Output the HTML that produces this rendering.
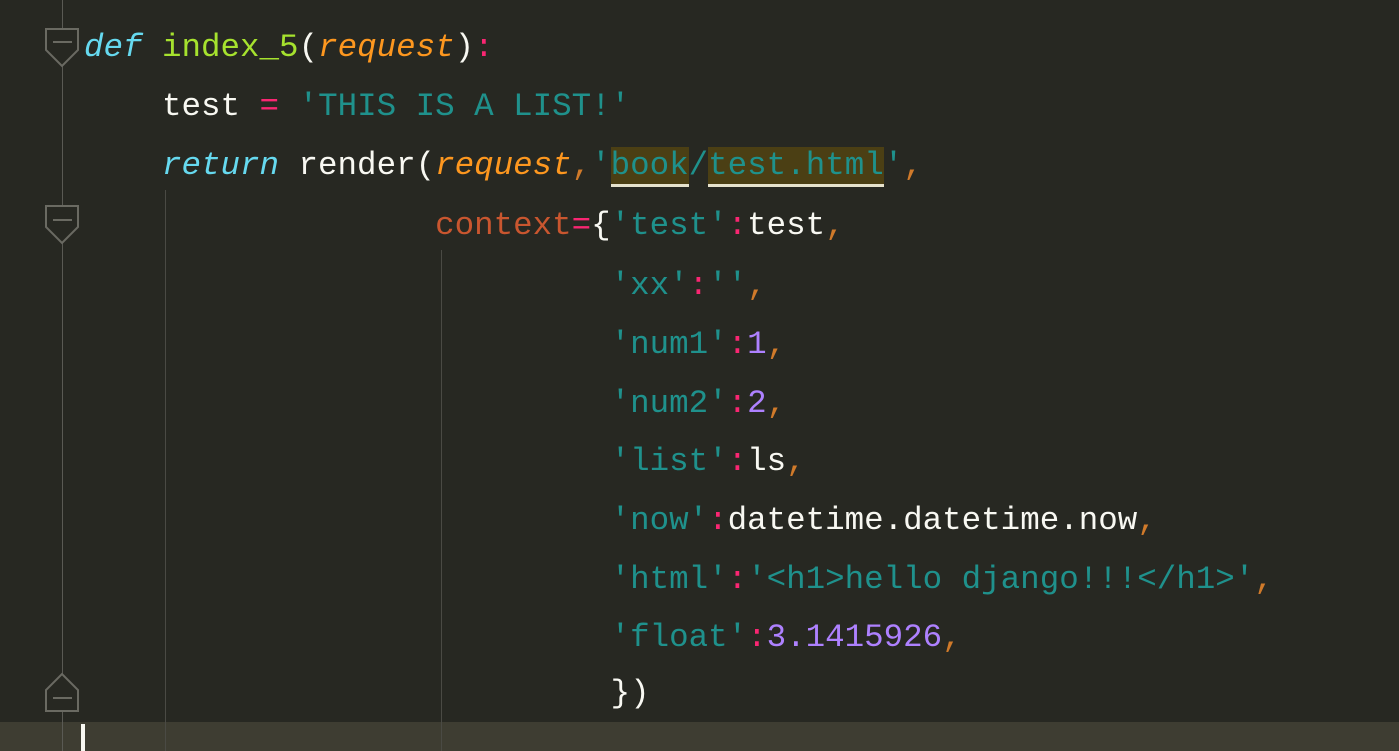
<!DOCTYPE html>
<html><head><meta charset="utf-8"><style>
html,body{margin:0;padding:0;}
body{width:1399px;height:751px;background:#272822;position:relative;overflow:hidden;font-family:"Liberation Mono","Noto Sans CJK SC",monospace;font-size:32.5px;color:#f8f8f2;}
.cur{position:absolute;left:0;top:722px;width:1399px;height:29px;background:#3e3d32;}
.l{position:absolute;left:84px;height:59px;line-height:59px;white-space:pre;}
.k{color:#66d9ef;font-style:italic}
.f{color:#a6e22e}
.p{color:#fd971f;font-style:italic}
.s{color:#1f918c}
.o{color:#f92672}
.c{color:#c9562f}
.n{color:#ae81ff}
.cm{color:#d07a2a}
.hl{background:#4b3f14;border-bottom:3px solid #e6e2cc;}
.g{position:absolute;width:1px;background:#4a4a44;}
</style></head><body>
<div class="cur"></div>
<div class="g" style="left:62px;top:0;height:751px;background:#5a5a54"></div>
<div class="g" style="left:165px;top:190px;height:561px"></div>
<div class="g" style="left:441px;top:250px;height:501px"></div>
<svg style="position:absolute;left:0;top:0" width="120" height="751">
<g fill="#272822" stroke="#6a6a62" stroke-width="2">
<path d="M46 29 H78 V50 L62 66 L46 50 Z"/><path d="M53 42 H72"/>
<path d="M46 206 H78 V227 L62 243 L46 227 Z"/><path d="M53 220 H72"/>
<path d="M46 711 H78 V690 L62 674 L46 690 Z"/><path d="M53 698 H72"/>
</g></svg>
<div style="position:absolute;left:81px;top:724px;width:4px;height:27px;background:#f8f8f2"></div>
<div class="l" style="top:18px"><span class="k">def</span> <span class="f">index_5</span>(<span class="p">request</span>)<span class="o">:</span></div>
<div class="l" style="top:77px">    test <span class="o">=</span> <span class="s">'THIS IS A LIST!'</span></div>
<div class="l" style="top:136px">    <span class="k">return</span> render(<span class="p">request</span><span class="cm">,</span><span class="s">'<span class="hl">book</span>/<span class="hl">test.html</span>'</span><span class="cm">,</span></div>
<div class="l" style="top:196px">                  <span class="c">context</span><span class="o">=</span>{<span class="s">'test'</span><span class="o">:</span>test<span class="cm">,</span></div>
<div class="l" style="top:256px">                           <span class="s">'xx'</span><span class="o">:</span><span class="s">''</span><span class="cm">,</span></div>
<div class="l" style="top:315px">                           <span class="s">'num1'</span><span class="o">:</span><span class="n">1</span><span class="cm">,</span></div>
<div class="l" style="top:374px">                           <span class="s">'num2'</span><span class="o">:</span><span class="n">2</span><span class="cm">,</span></div>
<div class="l" style="top:432px">                           <span class="s">'list'</span><span class="o">:</span>ls<span class="cm">,</span></div>
<div class="l" style="top:491px">                           <span class="s">'now'</span><span class="o">:</span>datetime.datetime.now<span class="cm">,</span></div>
<div class="l" style="top:550px">                           <span class="s">'html'</span><span class="o">:</span><span class="s">'&lt;h1&gt;hello django!!!&lt;/h1&gt;'</span><span class="cm">,</span></div>
<div class="l" style="top:608px">                           <span class="s">'float'</span><span class="o">:</span><span class="n">3.1415926</span><span class="cm">,</span></div>
<div class="l" style="top:664px">                           })</div>
</body></html>
